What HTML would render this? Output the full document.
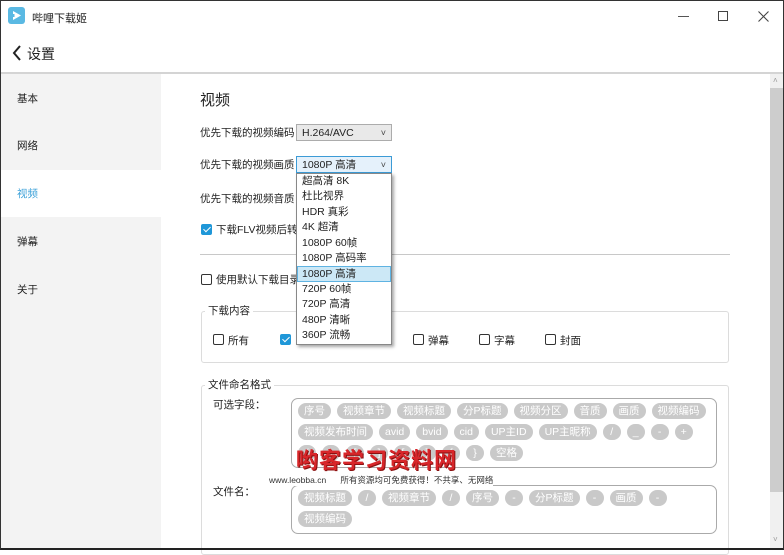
<!DOCTYPE html>
<html><head><meta charset="utf-8"><style>
*{margin:0;padding:0;box-sizing:border-box}
body{width:784px;height:550px;overflow:hidden;background:#fff;font-family:"Liberation Sans","Noto Sans CJK SC",sans-serif;font-size:10.5px;color:#222;position:relative}
.a{position:absolute;white-space:nowrap}
.win{position:absolute;left:0;top:0;width:784px;height:550px;border:1px solid #333;border-bottom:2px solid #222;pointer-events:none;z-index:50}
.cb{position:absolute;width:11px;height:11px;border:1px solid #333;border-radius:2px;background:#fff}
.cb.on{background:#1f97d8;border-color:#1f97d8}
.cb.on:after{content:"";position:absolute;left:3px;top:0px;width:3px;height:6px;border:solid #fff;border-width:0 1.5px 1.5px 0;transform:rotate(45deg)}
.combo{position:absolute;border:1px solid #acacac;background:#e9e9e9;height:17px;font-size:10.5px;padding:1px 5px;line-height:14px}
.combo:after{content:"˅";position:absolute;right:5px;top:1px;font-size:9px;color:#444}
.grp{position:absolute;border:1px solid #dcdcdc;border-radius:3px}
.gt{position:absolute;background:#fff;padding:0 3px;font-size:10.5px}
.box{position:absolute;border:1px solid #aaa;border-radius:7px;padding:4px 6px}
.r{display:flex;gap:6px;margin-bottom:5px;white-space:nowrap}
.t{background:#c9c9c9;color:#fff;border-radius:8px;height:16px;line-height:16px;padding:0 6px;font-size:10.5px;min-width:18px;text-align:center}
.dd{position:absolute;left:296px;top:173px;width:96px;height:172px;border:1px solid #888;background:#fff;box-shadow:2px 2px 3px rgba(0,0,0,.35);z-index:10}
.dd div{height:15.4px;line-height:15px;padding-left:5px;font-size:10.5px}
.dd .s{background:#cce8f6;border:1px solid #5fb3e2;padding-left:4px}
</style></head><body>
<div class="win"></div>
<div class="a" style="left:8px;top:7px;width:17px;height:17px;background:#5ab9e3;border-radius:3px"></div>
<svg class="a" style="left:11px;top:10px" width="11" height="11" viewBox="0 0 11 11"><path d="M2 1v9l8-4.5z" fill="#fff"/><rect x="0.5" y="4" width="3" height="3" fill="#5ab9e3"/></svg>
<div class="a" style="left:32px;top:10px;font-size:11px">哔哩下载姬</div>
<div class="a" style="left:678px;top:16px;width:11px;height:1px;background:#555"></div>
<div class="a" style="left:718px;top:11px;width:10px;height:10px;border:1px solid #444"></div>
<svg class="a" style="left:758px;top:11px" width="11" height="11"><path d="M0.5 0.5L10.5 10.5M10.5 0.5L0.5 10.5" stroke="#444" stroke-width="1.1"/></svg>
<svg class="a" style="left:12px;top:45px" width="10" height="16"><path d="M8 1L2 8l6 7" stroke="#222" stroke-width="2" fill="none"/></svg>
<div class="a" style="left:27px;top:44px;font-size:14px">设置</div>
<div class="a" style="left:1px;top:72px;width:782px;height:2px;background:#d4d4d4"></div>
<div class="a" style="left:1px;top:74px;width:160px;height:474px;background:#f3f3f3"></div>
<div class="a" style="left:1px;top:170px;width:160px;height:47px;background:#fff"></div>
<div class="a" style="left:17px;top:91px">基本</div>
<div class="a" style="left:17px;top:138px">网络</div>
<div class="a" style="left:17px;top:186px;color:#3aa0d8">视频</div>
<div class="a" style="left:17px;top:234px">弹幕</div>
<div class="a" style="left:17px;top:282px">关于</div>
<div class="a" style="left:770px;top:74px;width:13px;height:474px;background:#f0f0f0"></div>
<div class="a" style="left:770px;top:88px;width:13px;height:404px;background:#cdcdcd"></div>
<div class="a" style="left:773px;top:76px;font-size:8px;color:#999">˄</div>
<div class="a" style="left:773px;top:535px;font-size:8px;color:#999">˅</div>
<div class="a" style="left:200px;top:89px;font-size:15px">视频</div>
<div class="a" style="left:200px;top:125px">优先下载的视频编码：</div>
<div class="combo" style="left:296px;top:124px;width:96px">H.264/AVC</div>
<div class="a" style="left:200px;top:157px">优先下载的视频画质：</div>
<div class="combo" style="left:296px;top:156px;width:96px;background:#e5f1fb;border-color:#3c9bd6">1080P 高清</div>
<div class="a" style="left:200px;top:191px">优先下载的视频音质：</div>
<div class="cb on" style="left:201px;top:224px"></div>
<div class="a" style="left:216px;top:222px">下载FLV视频后转码</div>
<div class="a" style="left:200px;top:254px;width:530px;height:1px;background:#c8c8c8"></div>
<div class="cb" style="left:201px;top:274px"></div>
<div class="a" style="left:216px;top:272px">使用默认下载目录</div>
<div class="grp" style="left:201px;top:311px;width:528px;height:52px"></div>
<div class="gt" style="left:205px;top:303px">下载内容</div>
<div class="cb" style="left:213px;top:334px"></div><div class="a" style="left:228px;top:333px">所有</div>
<div class="cb on" style="left:280px;top:334px"></div>
<div class="cb" style="left:413px;top:334px"></div><div class="a" style="left:428px;top:333px">弹幕</div>
<div class="cb" style="left:479px;top:334px"></div><div class="a" style="left:494px;top:333px">字幕</div>
<div class="cb" style="left:545px;top:334px"></div><div class="a" style="left:560px;top:333px">封面</div>
<div class="grp" style="left:201px;top:385px;width:528px;height:170px"></div>
<div class="gt" style="left:205px;top:377px">文件命名格式</div>
<div class="a" style="left:213px;top:397px">可选字段：</div>
<div class="box" style="left:291px;top:398px;width:426px;height:70px">
<div class="r"><span class="t">序号</span><span class="t">视频章节</span><span class="t">视频标题</span><span class="t">分P标题</span><span class="t">视频分区</span><span class="t">音质</span><span class="t">画质</span><span class="t">视频编码</span></div>
<div class="r"><span class="t">视频发布时间</span><span class="t">avid</span><span class="t">bvid</span><span class="t">cid</span><span class="t">UP主ID</span><span class="t">UP主昵称</span><span class="t">/</span><span class="t">_</span><span class="t">-</span><span class="t">+</span></div>
<div class="r"><span class="t">(</span><span class="t">)</span><span class="t">[</span><span class="t">]</span><span class="t">[</span><span class="t">]</span><span class="t">{</span><span class="t">}</span><span class="t">空格</span></div>
</div>
<div class="a" style="left:213px;top:484px">文件名：</div>
<div class="box" style="left:291px;top:485px;width:426px;height:49px">
<div class="r"><span class="t">视频标题</span><span class="t">/</span><span class="t">视频章节</span><span class="t">/</span><span class="t">序号</span><span class="t">-</span><span class="t">分P标题</span><span class="t">-</span><span class="t">画质</span><span class="t">-</span></div>
<div class="r"><span class="t">视频编码</span></div>
</div>
<div class="a" style="left:296px;top:443px;font-size:22px;font-weight:bold;color:#d8262a;letter-spacing:1px;z-index:5;text-shadow:1px 1px 0 #8a1010">哟客学习资料网</div>
<div class="a" style="left:269px;top:474px;font-size:8.5px;color:#333;z-index:5;background:#fff">www.leobba.cn &nbsp;&nbsp;&nbsp;&nbsp; 所有资源均可免费获得！不共享、无网络</div>
<div class="dd">
<div>超高清 8K</div><div>杜比视界</div><div>HDR 真彩</div><div>4K 超清</div><div>1080P 60帧</div><div>1080P 高码率</div><div class="s">1080P 高清</div><div>720P 60帧</div><div>720P 高清</div><div>480P 清晰</div><div>360P 流畅</div>
</div>
</body></html>
